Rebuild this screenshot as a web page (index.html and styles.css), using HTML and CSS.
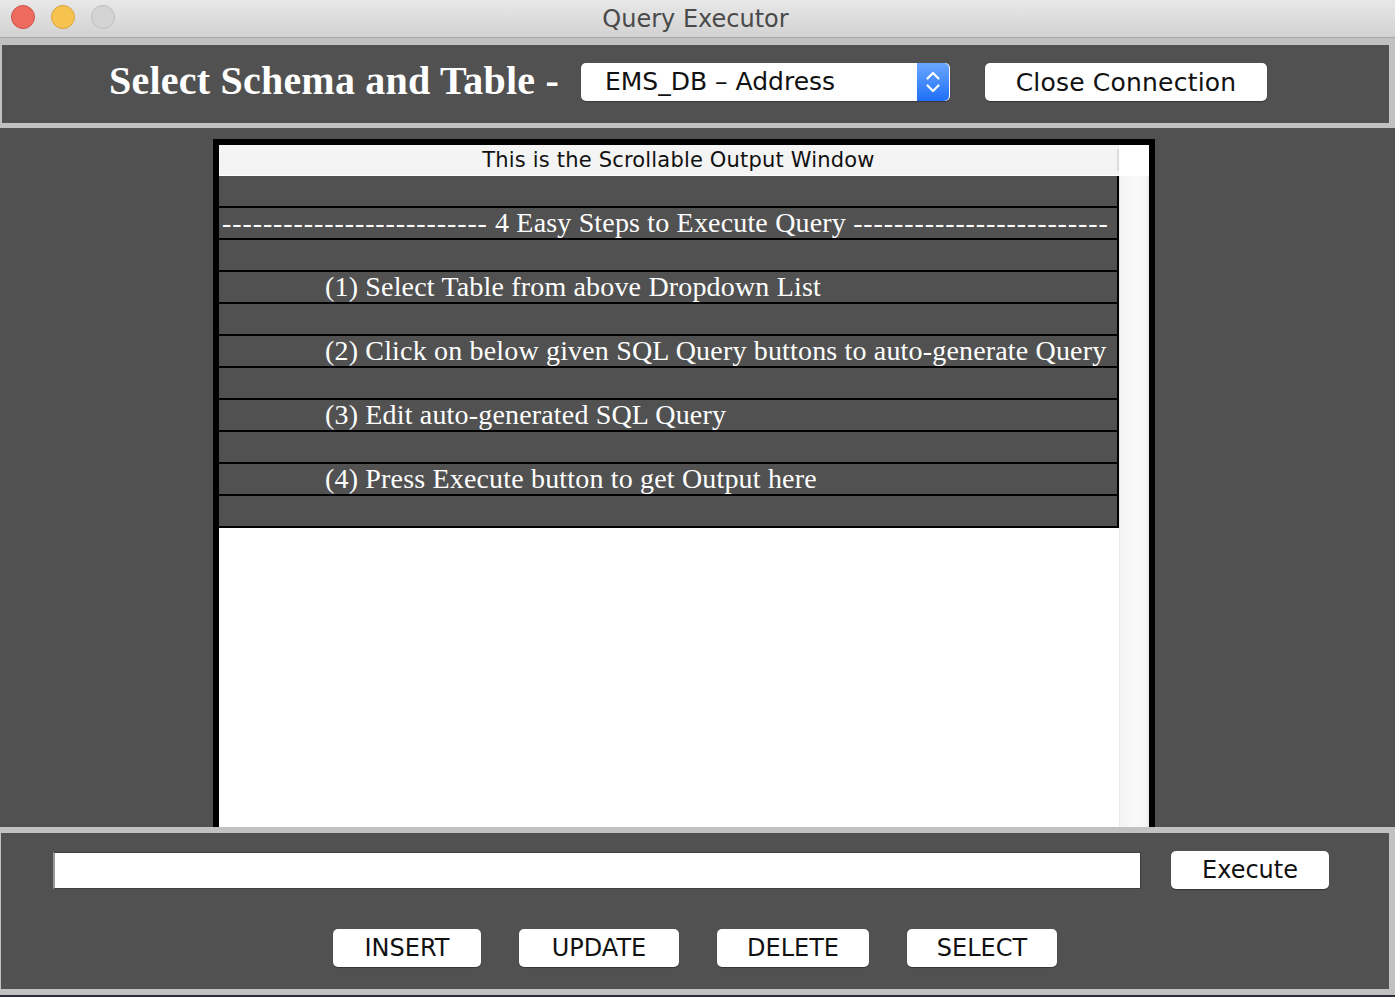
FILE: index.html
```html
<!DOCTYPE html>
<html>
<head>
<meta charset="utf-8">
<title>Query Executor</title>
<link rel="stylesheet" href="styles.css">
</head>
<body>
<div class="window">
  <div class="titlebar">
    <div class="lights">
      <span class="light red"></span>
      <span class="light yellow"></span>
      <span class="light gray"></span>
    </div>
    <div class="title">Query Executor</div>
    <div></div>
  </div>

  <div class="top-wrap">
    <div class="top-panel">
      <h1 class="heading">Select Schema and Table -</h1>
      <div class="combo">
        <span class="combo-text">EMS_DB – Address</span>
        <span class="combo-btn">
          <svg width="32" height="38" viewBox="0 0 32 38">
            <path d="M10.5 15.5 L16 10 L21.5 15.5" fill="none" stroke="#fff" stroke-width="2.2" stroke-linecap="round" stroke-linejoin="round"/>
            <path d="M10.5 22.5 L16 28 L21.5 22.5" fill="none" stroke="#fff" stroke-width="2.2" stroke-linecap="round" stroke-linejoin="round"/>
          </svg>
        </span>
      </div>
      <button class="btn close-btn">Close Connection</button>
    </div>
  </div>

  <div class="middle">
    <div class="output">
      <div class="output-head">
        <div class="col-head">
          <span class="col-title">This is the Scrollable Output Window</span>
          <span class="col-sep"></span>
        </div>
        <div class="corner"></div>
      </div>
      <div class="output-body">
        <div class="table">
          <div class="row"></div>
          <div class="row dash-row"><span class="dash">--------------------------</span> 4 Easy Steps to Execute Query <span class="dash">-------------------------</span></div>
          <div class="row"></div>
          <div class="row step">(1) Select Table from above Dropdown List</div>
          <div class="row"></div>
          <div class="row step">(2) Click on below given SQL Query buttons to auto-generate Query</div>
          <div class="row"></div>
          <div class="row step">(3) Edit auto-generated SQL Query</div>
          <div class="row"></div>
          <div class="row step">(4) Press Execute button to get Output here</div>
          <div class="row"></div>
        </div>
        <div class="scrollbar"></div>
      </div>
    </div>
  </div>

  <div class="bottom-wrap">
    <div class="bottom-panel">
      <div class="query-row">
        <input class="query-field" type="text" value="">
        <button class="btn exec-btn">Execute</button>
      </div>
      <div class="action-row">
        <button class="btn act-btn btn-insert">INSERT</button>
        <button class="btn act-btn btn-update">UPDATE</button>
        <button class="btn act-btn btn-delete">DELETE</button>
        <button class="btn act-btn btn-select">SELECT</button>
      </div>
    </div>
  </div>
  <div class="desk"></div>
</div>
</body>
</html>
```

FILE: styles.css
```css
* { box-sizing: border-box; }

html, body {
  margin: 0;
  padding: 0;
}

body {
  width: 1395px;
  height: 997px;
  overflow: hidden;
  background: #c1c1c1;
  font-family: "DejaVu Sans", "Liberation Sans", sans-serif;
}

.window {
  display: flex;
  flex-direction: column;
  width: 1395px;
}

/* title bar */
.titlebar {
  height: 38px;
  border-bottom: 1px solid #a6a6a6;
  background: linear-gradient(#e8e8e8, #d2d2d2);
  display: grid;
  grid-template-columns: 1fr auto 1fr;
  align-items: center;
}

.lights {
  display: flex;
  gap: 16px;
  padding-left: 11px;
  padding-bottom: 3px;
}

.light {
  width: 24px;
  height: 24px;
  border-radius: 50%;
  display: block;
}

.light.red { background: #ee6b60; border: 1px solid #d0514a; }
.light.yellow { background: #f6c250; border: 1px solid #dca23c; }
.light.gray { background: #d4d4d4; border: 1px solid #bdbdbd; }

.title {
  font-size: 24px;
  color: #4a4a4a;
  padding-top: 1px;
  padding-right: 4px;
}

/* top panel */
.top-wrap {
  padding: 7px 6px 5px 2px;
}

.top-panel {
  height: 78px;
  background: #515151;
  display: flex;
  align-items: center;
  padding-left: 107px;
  padding-bottom: 4px;
}

.heading {
  margin: 0;
  font-family: "Liberation Serif", "Times New Roman", serif;
  font-weight: bold;
  font-size: 40px;
  letter-spacing: 0.22px;
  color: #fff;
  line-height: 40px;
  padding-bottom: 2px;
}

.combo {
  margin-left: 22px;
  width: 369px;
  height: 38px;
  background: #fff;
  border-radius: 5px;
  display: flex;
  align-items: center;
  box-shadow: 0 1px 1px rgba(0,0,0,0.3);
  overflow: hidden;
}

.combo-text {
  flex: 1;
  padding-left: 24px;
  font-size: 25px;
  color: #111;
  line-height: 38px;
}

.combo-btn {
  width: 32px;
  height: 38px;
  margin-right: 1px;
  display: block;
  background: linear-gradient(#6aa8ff, #1e6ff8);
  border-radius: 0 5px 5px 0;
}

.combo-btn svg { display: block; }

.btn {
  background: #fff;
  border: 0;
  border-radius: 5px;
  box-shadow: 0 1px 1px rgba(0,0,0,0.35);
  font-family: "DejaVu Sans", "Liberation Sans", sans-serif;
  color: #111;
  padding: 0;
  height: 38px;
}

.close-btn {
  margin-left: 35px;
  width: 282px;
  font-size: 25px;
  letter-spacing: 0.2px;
}

/* middle output area */
.middle {
  height: 699px;
  background: #515151;
  padding: 11px 0 0 213px;
  overflow: hidden;
}

.output {
  width: 942px;
  height: 688px;
  border: 6px solid #000;
  border-bottom: 0;
  background: #fff;
  display: flex;
  flex-direction: column;
}

.output-head {
  display: flex;
  height: 31px;
}

.col-head {
  width: 900px;
  height: 31px;
  background: #f4f4f4;
  border-bottom: 1px solid #fff;
  display: flex;
  align-items: center;
}

.col-title {
  flex: 1;
  text-align: center;
  padding-left: 21px;
  font-size: 21px;
  color: #111;
  letter-spacing: 0.18px;
}

.col-sep {
  width: 2px;
  height: 22px;
  background: #dcdcdc;
}

.corner {
  width: 30px;
  background: #fff;
}

.output-body {
  flex: 1;
  display: flex;
}

.table {
  width: 900px;
}

.row {
  height: 32px;
  background: #515151;
  border-bottom: 2px solid #000;
  border-right: 2px solid #000;
  font-family: "Liberation Serif", "Times New Roman", serif;
  font-size: 28px;
  letter-spacing: 0.17px;
  line-height: 30px;
  color: #fff;
  white-space: nowrap;
}

.step {
  padding-left: 106px;
}

.dash-row {
  padding-left: 3px;
}

.dash {
  letter-spacing: 0.9px;
}

.scrollbar {
  width: 30px;
  background: linear-gradient(to right, #dedede 0, #f3f3f3 1px, #fafafa 50%, #f5f5f5 90%, #e9e9e9 100%);
}

/* bottom panel */
.bottom-wrap {
  padding: 6px 6px 6px 1px;
}

.bottom-panel {
  height: 156px;
  background: #515151;
  padding-top: 18px;
}

.query-row {
  display: flex;
  align-items: center;
  height: 38px;
  padding-left: 52px;
}

.query-field {
  width: 1088px;
  height: 37px;
  margin: 0;
  background: #fff;
  border: 1px solid #3e3e3e;
  border-left: 2px solid #9a9a9a;
  outline: none;
}

.exec-btn {
  margin-left: 30px;
  width: 158px;
  font-size: 24px;
}

.action-row {
  display: flex;
  justify-content: center;
  gap: 38px;
  margin-top: 40px;
}

.act-btn {
  font-size: 24px;
}

.btn-insert { width: 148px; }
.btn-update { width: 160px; }
.btn-delete { width: 152px; }
.btn-select { width: 150px; }

.desk {
  height: 2px;
  background: #2b2d3a;
}
```
